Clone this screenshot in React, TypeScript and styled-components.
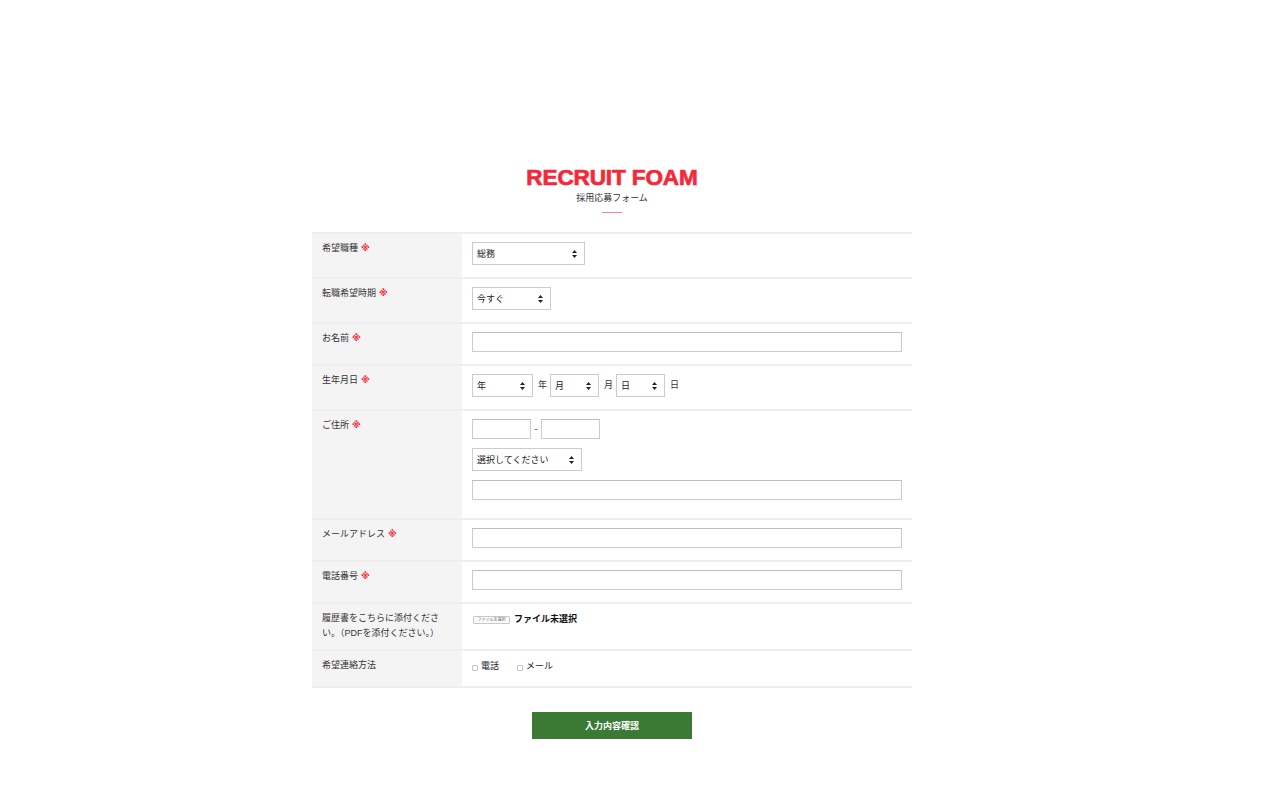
import React from 'react';
import styled, { createGlobalStyle } from 'styled-components';

const colors = {
  red: '#f5283a',
  text: '#333333',
  labelBg: '#f4f4f4',
  line: '#eeeeee',
  border: '#cccccc',
  green: '#3b7a35',
};

const GlobalStyle = createGlobalStyle`
  html, body {
    margin: 0;
    padding: 0;
    background: #ffffff;
  }
  body {
    font-family: "Liberation Sans", "Noto Sans CJK JP", sans-serif;
    color: ${colors.text};
  }
`;

const Page = styled.div`
  display: flex;
  justify-content: center;
  padding: 167px 56px 60px 0;
`;

const Container = styled.div`
  width: 600px;
  display: flex;
  flex-direction: column;
  align-items: center;
`;

const Title = styled.h1`
  margin: 0;
  font-family: "Liberation Sans", sans-serif;
  font-size: 22.5px;
  line-height: 22px;
  font-weight: 700;
  color: ${colors.red};
  -webkit-text-stroke: 0.7px ${colors.red};
  letter-spacing: -0.1px;
`;

const SubTitle = styled.p`
  margin: 2px 0 0;
  font-size: 9px;
  line-height: 14px;
  color: #333;
`;

const TitleLine = styled.span`
  display: block;
  width: 20px;
  height: 1px;
  margin-top: 7px;
  background: #f08a93;
`;

const Table = styled.div`
  width: 100%;
  margin-top: 19px;
  border-bottom: 2px solid ${colors.line};
`;

const Row = styled.div`
  display: grid;
  grid-template-columns: 150px 1fr;
  border-top: 2px solid ${colors.line};
`;

const Label = styled.div`
  background: ${colors.labelBg};
  padding: 7px 10px 8px;
  font-size: 9px;
  line-height: 15px;
  color: #333;
`;

const Required = styled.span`
  font-family: "DejaVu Sans", "Noto Sans CJK JP", sans-serif;
  color: ${colors.red};
  font-weight: 700;
  font-size: 9px;
  margin-left: 3px;
`;

const Field = styled.div<{ $bottom?: number }>`
  padding: 8px 10px ${(p) => p.$bottom ?? 12}px;
  display: flex;
  flex-direction: column;
  gap: 9px;
  font-size: 9px;
  line-height: 15px;
`;

const Inline = styled.div`
  display: flex;
  align-items: center;
`;

const SelectWrap = styled.div<{ $w: number }>`
  position: relative;
  width: ${(p) => p.$w}px;
  height: 23px;
  flex: none;
`;

const Select = styled.select`
  appearance: none;
  -webkit-appearance: none;
  width: 100%;
  height: 100%;
  margin: 0;
  padding: 0 0 0 4px;
  border: 1px solid ${colors.border};
  border-radius: 0;
  background: #ffffff;
  font-family: inherit;
  font-size: 9px;
  color: #222;
  outline: none;
`;

const Arrows = styled.svg`
  position: absolute;
  right: 8px;
  top: 8px;
  pointer-events: none;
`;

const TextInput = styled.input<{ $w?: number }>`
  box-sizing: border-box;
  width: ${(p) => (p.$w ? `${p.$w}px` : '100%')};
  height: 20px;
  margin: 0;
  padding: 0 4px;
  border: 1px solid ${colors.border};
  border-top-color: #bdbdbd;
  border-radius: 0;
  background: #fff;
  font-size: 9px;
  outline: none;
`;

const Unit = styled.span`
  margin: 0 3px 0 5px;
  font-size: 9px;
  color: #333;
`;

const Dash = styled.span`
  width: 10px;
  text-align: center;
  font-size: 9px;
  color: #333;
`;

const FileRow = styled.div`
  display: flex;
  align-items: center;
  height: 15px;
`;

const FileButton = styled.span`
  display: inline-flex;
  align-items: center;
  justify-content: center;
  width: 35px;
  height: 6px;
  margin-left: 1px;
  border: 1px solid #c8c8c8;
  border-radius: 1px;
  font-size: 4px;
  line-height: 4px;
  color: #666;
  background: #fafafa;
`;

const FileText = styled.span`
  margin-left: 4px;
  font-size: 9px;
  font-weight: 700;
  color: #111;
`;

const Checks = styled.div`
  display: flex;
  align-items: center;
  gap: 18px;
  height: 15px;
`;

const CheckItem = styled.label`
  display: flex;
  align-items: center;
  font-size: 9px;
  color: #222;
`;

const Box = styled.span`
  display: inline-block;
  width: 4px;
  height: 4px;
  margin: 3px 3px 0 0;
  border: 1px solid #c4c4c4;
  border-radius: 1px;
`;

const Submit = styled.button`
  margin-top: 24px;
  width: 160px;
  height: 27px;
  border: none;
  border-radius: 0;
  background: ${colors.green};
  color: #ffffff;
  font-family: inherit;
  font-size: 9px;
  font-weight: 700;
  cursor: pointer;
`;

const SelectBox = ({ width, value }: { width: number; value: string }) => (
  <SelectWrap $w={width}>
    <Select defaultValue={value}>
      <option>{value}</option>
    </Select>
    <Arrows width="5" height="8" viewBox="0 0 5 8">
      <path d="M0 3 L2.5 0 L5 3 Z" fill="#222" />
      <path d="M0 5 L2.5 8 L5 5 Z" fill="#222" />
    </Arrows>
  </SelectWrap>
);

export default function App() {
  return (
    <>
      <GlobalStyle />
      <Page>
        <Container>
          <Title>RECRUIT FOAM</Title>
          <SubTitle>採用応募フォーム</SubTitle>
          <TitleLine />
          <Table>
            <Row>
              <Label>
                希望職種<Required>※</Required>
              </Label>
              <Field>
                <SelectBox width={113} value="総務" />
              </Field>
            </Row>
            <Row>
              <Label>
                転職希望時期<Required>※</Required>
              </Label>
              <Field>
                <SelectBox width={79} value="今すぐ" />
              </Field>
            </Row>
            <Row>
              <Label>
                お名前<Required>※</Required>
              </Label>
              <Field>
                <TextInput type="text" />
              </Field>
            </Row>
            <Row>
              <Label>
                生年月日<Required>※</Required>
              </Label>
              <Field>
                <Inline>
                  <SelectBox width={61} value="年" />
                  <Unit>年</Unit>
                  <SelectBox width={49} value="月" />
                  <Unit>月</Unit>
                  <SelectBox width={49} value="日" />
                  <Unit>日</Unit>
                </Inline>
              </Field>
            </Row>
            <Row>
              <Label>
                ご住所<Required>※</Required>
              </Label>
              <Field $bottom={18}>
                <Inline>
                  <TextInput type="text" $w={59} />
                  <Dash>-</Dash>
                  <TextInput type="text" $w={59} />
                </Inline>
                <SelectBox width={110} value="選択してください" />
                <TextInput type="text" />
              </Field>
            </Row>
            <Row>
              <Label>
                メールアドレス<Required>※</Required>
              </Label>
              <Field>
                <TextInput type="text" />
              </Field>
            </Row>
            <Row>
              <Label>
                電話番号<Required>※</Required>
              </Label>
              <Field>
                <TextInput type="text" />
              </Field>
            </Row>
            <Row>
              <Label>
                履歴書をこちらに添付ください。（PDFを添付ください。）
              </Label>
              <Field>
                <FileRow>
                  <FileButton>ファイルを選択</FileButton>
                  <FileText>ファイル未選択</FileText>
                </FileRow>
              </Field>
            </Row>
            <Row>
              <Label>希望連絡方法</Label>
              <Field>
                <Checks>
                  <CheckItem>
                    <Box />
                    電話
                  </CheckItem>
                  <CheckItem>
                    <Box />
                    メール
                  </CheckItem>
                </Checks>
              </Field>
            </Row>
          </Table>
          <Submit type="button">入力内容確認</Submit>
        </Container>
      </Page>
    </>
  );
}
